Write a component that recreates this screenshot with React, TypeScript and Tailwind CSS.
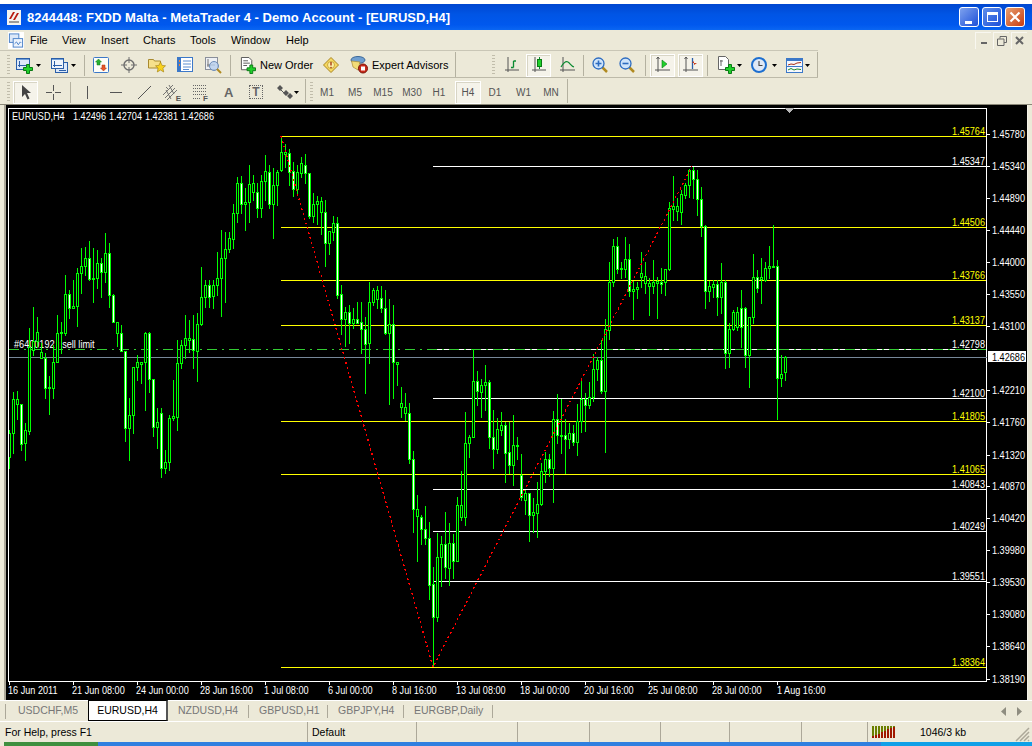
import React from "react";

// [high, bodyTop, bodyBottom, low, bear?] in page pixels, one row per H4 bar
const BARS: number[][] = [
  [430,433,457,468],[392,399,433,453],[391,399,404,419],[404,404,444,450,1],[423,430,443,460],[328,347,431,434],[307,341,350,355],[317,332,341,347],
  [343,352,358,358],[353,358,388,398,1],[376,387,388,414],[345,362,388,398],[315,333,362,362],[322,332,333,353],[275,294,333,335],[290,294,308,318,1],
  [280,306,308,308],[268,273,306,326],[248,266,273,293],[247,258,266,275],[241,258,279,280,1],[248,278,279,302],[250,263,278,288],[258,263,272,297,1],
  [233,253,272,282],[243,253,295,307,1],[294,295,322,322,1],[322,322,333,346],[325,333,351,351,1],[351,351,428,441,1],[398,415,428,460],[367,367,415,433],
  [355,362,367,380],[362,362,364,383],[332,333,362,410],[332,333,379,392,1],[379,379,427,436,1],[408,422,427,448],[408,413,468,477,1],[450,462,468,473],
  [415,418,462,470],[380,416,418,420],[340,363,417,430],[340,345,363,368],[315,338,345,358],[320,338,340,352],[315,339,350,368,1],[313,324,351,381],
  [267,297,324,325],[280,285,297,307],[280,285,297,307,1],[280,285,296,308],[252,278,285,295],[230,258,278,316],[232,249,258,302],[232,238,249,252],
  [204,213,239,248],[177,183,213,222],[176,183,204,213,1],[188,202,204,230],[165,184,202,222],[175,183,192,200],[183,192,208,217,1],[175,181,208,217],
  [155,171,181,200],[165,172,204,208,1],[168,185,204,238],[170,172,185,205],[137,152,170,171],[144,152,154,167],[149,153,172,185,1],[162,171,189,196,1],
  [165,172,189,193],[157,163,173,177],[154,165,173,183,1],[173,173,216,218,1],[193,204,216,222],[196,201,204,224],[197,201,212,234],[200,212,243,266,1],
  [231,231,243,254],[216,223,232,240],[217,223,295,298,1],[285,294,319,334,1],[307,312,319,346],[305,312,323,343,1],[308,319,323,328],[302,319,323,323,1],
  [302,322,329,353,1],[317,329,344,393,1],[282,302,343,363],[288,290,302,305],[286,290,299,308],[286,298,308,312,1],[290,308,333,334,1],[299,324,333,404],
  [305,324,362,398,1],[362,362,364,385],[387,403,407,417],[393,407,413,420],[403,413,459,463,1],[451,459,509,532,1],[495,509,516,561],[515,517,529,544,1],
  [506,529,538,544,1],[522,538,585,599,1],[567,584,617,666,1],[533,557,617,621],[536,544,557,586],[512,544,567,578,1],[523,543,568,585],[534,543,561,578,1],
  [497,505,561,561],[471,505,517,520],[412,443,517,525],[435,437,443,457],[349,381,437,437],[371,381,391,405,1],[379,385,392,417],[365,382,385,410],
  [380,382,437,448,1],[410,437,449,468,1],[418,429,449,453],[412,425,430,435],[422,425,453,482,1],[422,452,465,473,1],[415,445,465,485],[437,445,446,459],
  [454,475,497,500,1],[490,493,500,514],[493,493,515,541,1],[498,512,515,532],[482,504,513,537],[463,471,504,505],[452,459,471,482],[454,459,468,476,1],
  [411,419,468,502],[394,419,435,443,1],[399,435,436,453],[419,435,439,473,1],[423,433,439,448],[425,433,442,445,1],[404,421,442,455],[380,399,421,432],
  [393,399,405,431,1],[382,397,405,408],[354,369,397,401],[357,360,369,380],[340,360,391,393,1],[319,329,391,452],[262,282,330,339],[239,246,282,286],
  [237,246,269,273,1],[262,268,269,278],[237,259,269,277],[244,259,291,296,1],[281,289,291,319],[282,287,289,298],[252,273,277,287],[262,276,283,293],
  [278,283,286,315],[260,282,286,293],[277,281,283,318],[268,282,284,293,1],[269,269,282,295],[202,208,269,270],[176,206,209,220],[198,206,211,220],
  [190,194,212,224],[183,185,195,198],[169,170,185,197],[167,170,179,198,1],[170,179,199,215,1],[187,199,226,236,1],[225,226,291,308,1],[281,286,291,301],
  [280,284,287,297],[280,284,297,315,1],[263,282,297,313],[280,282,353,368,1],[323,329,353,367],[310,312,329,330],[307,312,327,330],[290,308,327,347,1],
  [307,308,355,367,1],[317,317,355,387],[254,277,317,323],[270,277,288,292,1],[258,277,279,303],[262,268,280,281],[246,266,268,278],[225,266,267,267],
  [260,266,378,419,1],[355,374,378,386],[356,357,372,380],
];

// fibonacci levels: y, label, colour, left end
const LEVELS: [number, string, string, number][] = [
  [136, "1.45764", "#ffff00", 281],
  [166, "1.45347", "#ffffff", 433],
  [227, "1.44506", "#ffff00", 281],
  [280, "1.43766", "#ffff00", 281],
  [325, "1.43137", "#ffff00", 281],
  [349, "1.42798", "#ffffff", 433],
  [398, "1.42100", "#ffffff", 433],
  [421, "1.41805", "#ffff00", 281],
  [474, "1.41065", "#ffff00", 281],
  [489, "1.40843", "#ffffff", 433],
  [531, "1.40249", "#ffffff", 433],
  [581, "1.39551", "#ffffff", 433],
  [667, "1.38364", "#ffff00", 281],
];

const PRICES: [number, string][] = [
  [134, "1.45780"], [166, "1.45340"], [198, "1.44890"], [230, "1.44440"], [262, "1.44000"], [294, "1.43550"],
  [326, "1.43100"], [390, "1.42210"], [422, "1.41760"], [455, "1.41320"], [486, "1.40870"], [518, "1.40420"],
  [550, "1.39980"], [582, "1.39530"], [614, "1.39080"], [646, "1.38640"], [679, "1.38190"],
];

const DATES = [
  "16 Jun 2011", "21 Jun 08:00", "24 Jun 00:00", "28 Jun 16:00", "1 Jul 08:00", "6 Jul 00:00", "8 Jul 16:00",
  "13 Jul 08:00", "18 Jul 00:00", "20 Jul 16:00", "25 Jul 08:00", "28 Jul 00:00", "1 Aug 16:00",
];

const ChartText = ({ x, y, fill = "#ffffff", anchor = "start", children }: { x: number; y: number; fill?: string; anchor?: "start" | "end"; children: React.ReactNode }) => (
  <text transform={`translate(${x} ${y}) scale(0.83 1)`} fontFamily="'Liberation Sans', sans-serif" fontSize={11} fill={fill} textAnchor={anchor}>
    {children}
  </text>
);

const Chart = () => (
  <svg viewBox="6 105 1021 595" className="block w-[1021px] h-[595px] bg-black">
    <g shapeRendering="crispEdges">
      <rect x="8.5" y="108.5" width="978" height="573" fill="none" stroke="#ffffff" />
      {PRICES.map(([y]) => <rect key={y} x="987" y={y} width="3" height="1" fill="#ffffff" />)}
      {DATES.map((_, k) => <rect key={k} x={9 + 64 * k} y="682" width="1" height="3" fill="#ffffff" />)}
      <path d="M785 108h9l-4.5 5z" fill="#b8b8b8" />
      {LEVELS.map(([y, , color, left]) => <rect key={y} x={left} y={y} width={986 - left} height="1" fill={color} />)}
      <rect x="9" y="357" width="978" height="1" fill="#778899" />
      <line x1="9" y1="349.5" x2="986" y2="349.5" stroke="#32cd32" strokeDasharray="10 5 2 5" />
    </g>
    {LEVELS.map(([y, label, color]) => <ChartText key={y} x={985} y={y - 1} fill={color} anchor="end">{label}</ChartText>)}
    <ChartText x={14} y={348}>#6400192 ı sell limit</ChartText>
    <g shapeRendering="crispEdges">
      {BARS.map(([high, top, bottom, low, bear], i) => {
        const x = 9 + 4 * i;
        return (
          <g key={i}>
            <rect x={x} y={high} width="1" height={low - high + 1} fill="#00ff00" />
            <rect x={x - 1 < 9 ? 9 : x - 1} y={top} width={x - 1 < 9 ? 2 : 3} height={bottom - top + 1} fill="#00ff00" />
            {bottom - top > 1 && <rect x={x} y={top + 1} width="1" height={bottom - top - 1} fill={bear ? "#ffffff" : "#000000"} />}
          </g>
        );
      })}
      <polyline points="281,136 433,667 692,166" fill="none" stroke="#ff0000" strokeWidth="1.3" strokeDasharray="2 3" />
      <rect x="988" y="351" width="38" height="11" fill="#ffffff" />
    </g>
    <ChartText x={12} y={120}>EURUSD,H4</ChartText>
    <ChartText x={73} y={120}>1.42496</ChartText>
    <ChartText x={109} y={120}>1.42704</ChartText>
    <ChartText x={145} y={120}>1.42381</ChartText>
    <ChartText x={181} y={120}>1.42686</ChartText>
    {PRICES.map(([y, p]) => <ChartText key={p} x={992} y={y + 4}>{p}</ChartText>)}
    <ChartText x={992} y={361} fill="#000000">1.42686</ChartText>
    {DATES.map((d, k) => <ChartText key={d} x={(k === 12 ? 9 : 8) + 64 * k} y={694}>{d}</ChartText>)}
  </svg>
);

const Grip = ({ className = "" }: { className?: string }) => (
  <div className={`w-[3px] h-[20px] shrink-0 bg-[repeating-linear-gradient(to_bottom,#c1bdab_0,#c1bdab_1px,transparent_1px,transparent_3px)] ${className}`} />
);
const Sep = ({ className = "" }: { className?: string }) => <div className={`w-px h-[21px] shrink-0 bg-[#b4b1a0] ${className}`} />;
const Arrow = ({ className = "" }: { className?: string }) => (
  <svg viewBox="0 0 5 3" className={`w-[5px] h-[3px] shrink-0 ${className}`}><path d="M0 0h5L2.500 3z" fill="#000" /></svg>
);
const Pressed = ({ className = "", children }: { className?: string; children: React.ReactNode }) => (
  <div className={`h-[23px] w-[25px] shrink-0 flex items-center justify-center bg-[#f5f3ea] border border-white shadow-[inset_1px_1px_0_#d8d5c5] ${className}`}>{children}</div>
);

const Plus = ({ x, y }: { x: number; y: number }) => (
  <path transform={`translate(${x} ${y})`} d="M3.500 .5h3v3h3v3h-3v3h-3v-3h-3v-3h3z" fill="#1fd02a" stroke="#0a7a14" />
);
const Glass = ({ sign }: { sign: "+" | "-" }) => (
  <svg viewBox="0 0 17 17" className="w-[17px] h-[17px]">
    <path d="M10 10l5 5" stroke="#b08a20" strokeWidth="2.500" />
    <circle cx="6.500" cy="6.500" r="5.500" fill="#cfe4fa" stroke="#2d6cc0" strokeWidth="1.300" />
    <path d={sign === "+" ? "M3.500 6.500h6M6.500 3.500v6" : "M3.500 6.500h6"} stroke="#2d6cc0" strokeWidth="1.600" />
  </svg>
);

const Toolbar1 = () => (
  <div className="flex items-center h-[28px] pt-[2px] w-[818px] border-y border-[#bdbaa9] border-t-[#c9c6b6]">
    <Grip className="ml-[7px]" />
    <svg viewBox="0 0 17 17" className="ml-[6px] w-[17px] h-[17px] shrink-0">
      <rect x=".5" y="1.500" width="13" height="11" fill="#dce8f8" stroke="#2a5ea8" />
      <path d="M1 2.500h12" stroke="#6f9fda" /><path d="M3.500 4v6M2 8.500h9" stroke="#2a5ea8" />
      <Plus x={7} y={7} />
    </svg>
    <Arrow className="ml-[3px]" />
    <svg viewBox="0 0 17 17" className="ml-[10px] w-[17px] h-[17px] shrink-0">
      <rect x="4.500" y="5.500" width="12" height="10" fill="#dce8f8" stroke="#2a5ea8" />
      <rect x=".5" y="1.500" width="12" height="10" fill="#eef4fc" stroke="#2a5ea8" />
      <path d="M1 2.500h11" stroke="#6f9fda" /><path d="M3.500 4v6M2 8.500h9M8 13.500h7" stroke="#2a5ea8" />
    </svg>
    <Arrow className="ml-[3px]" />
    <Sep className="ml-[8px]" />
    <svg viewBox="0 0 16 16" className="ml-[8px] w-[16px] h-[16px] shrink-0">
      <rect x=".5" y=".5" width="15" height="15" rx="1" fill="#fdfdf8" stroke="#3c78c8" />
      <path d="M5.500 2l3 3H7v3H4V5H2.500z" fill="#28b030" stroke="#137a1a" strokeWidth=".5" />
      <path d="M10.500 14l3-3H12V8H9v3H7.500z" fill="#e8552a" stroke="#a83010" strokeWidth=".5" />
    </svg>
    <svg viewBox="0 0 16 16" className="ml-[12px] w-[16px] h-[16px] shrink-0">
      <circle cx="8" cy="8" r="5" fill="none" stroke="#6e6e6e" strokeWidth="1.400" />
      <path d="M8 0v6M8 10v6M0 8h6M10 8h6" stroke="#6e6e6e" />
    </svg>
    <svg viewBox="0 0 18 18" className="ml-[11px] w-[18px] h-[18px] shrink-0">
      <path d="M.5 3.500h5l1 1.500h6v7H.5z" fill="#f6e08c" stroke="#a88a30" />
      <path d="M12.500 6l1.600 3.400 3.400.4-2.600 2.400.8 3.800-3.200-2-3.200 2 .8-3.800-2.600-2.400 3.400-.4z" fill="#f9d21e" stroke="#a8861a" strokeWidth=".7" />
    </svg>
    <svg viewBox="0 0 16 16" className="ml-[11px] w-[16px] h-[16px] shrink-0">
      <rect x=".5" y=".5" width="15" height="14" fill="#fff" stroke="#3c78c8" />
      <rect x="1" y="1" width="3" height="13" fill="#3c78c8" />
      <path d="M6 4h8M6 7h8M6 10h8M6 12.500h6" stroke="#5b8dd0" />
      <path d="M2 4h1M2 8h1" stroke="#f08030" strokeWidth="2" />
    </svg>
    <svg viewBox="0 0 17 17" className="ml-[12px] w-[17px] h-[17px] shrink-0">
      <rect x=".5" y=".5" width="12" height="12" fill="#eef0f4" stroke="#8a8f9a" />
      <path d="M3 2v8M2 8h8" stroke="#777" />
      <circle cx="9" cy="9" r="4.500" fill="#b8d0ee" fillOpacity=".8" stroke="#6d8cb8" />
      <path d="M12 12l4 4" stroke="#b08a20" strokeWidth="2" />
    </svg>
    <Sep className="ml-[8px]" />
    <svg viewBox="0 0 17 18" className="ml-[9px] w-[16px] h-[17px] shrink-0">
      <path d="M1.500 .5h8l3 3v10h-11z" fill="#fff" stroke="#555" />
      <path d="M3.500 4h5M3.500 6.500h7M3.500 9h4" stroke="#555" />
      <Plus x={7} y={8} />
    </svg>
    <span className="ml-[4px] w-[52px] shrink-0 whitespace-nowrap">New Order</span>
    <svg viewBox="0 0 16 16" className="ml-[11px] w-[16px] h-[16px] shrink-0">
      <path d="M8 .5L15.500 8 8 15.500.5 8z" fill="#f6d860" stroke="#a88420" />
      <circle cx="8" cy="8" r="3.500" fill="#fbeea8" stroke="#b89020" strokeWidth=".7" />
      <path d="M8 5v3.500" stroke="#a83a10" strokeWidth="1.400" /><circle cx="8" cy="10.500" r=".8" fill="#a83a10" />
    </svg>
    <svg viewBox="0 0 18 18" className="ml-[11px] w-[18px] h-[18px] shrink-0">
      <ellipse cx="8" cy="4" rx="7" ry="3.500" fill="#6f9fd0" stroke="#3c6898" />
      <path d="M1.500 5l1.500 6 5 3 2-8z" fill="#f2dc78" stroke="#a88a30" strokeWidth=".7" />
      <circle cx="13" cy="12.500" r="4.500" fill="#c82818" stroke="#7a1408" />
      <rect x="11" y="10.500" width="4" height="4" fill="#fff" />
    </svg>
    <span className="ml-[4px] w-[77px] shrink-0 whitespace-nowrap">Expert Advisors</span>
    <Sep className="ml-[6px] h-[25px] -mt-[2px]" />
    <Grip className="ml-[36px]" />
    <svg viewBox="0 0 14 16" className="ml-[10px] w-[14px] h-[16px] shrink-0">
      <path d="M3 0v15M0 13h14" stroke="#555" />
      <path d="M8.500 10.500V4M6 10.500h2.500M8.500 4H11" stroke="#0a8a30" strokeWidth="1.300" />
    </svg>
    <Pressed className="ml-[7px]">
      <svg viewBox="0 0 14 16" className="w-[14px] h-[16px]">
        <path d="M3 0v15M0 13h14" stroke="#555" />
        <path d="M7.500 0v12" stroke="#0a8a30" /><rect x="5.500" y="2.500" width="4" height="7" fill="#1fd02a" stroke="#0a7a14" />
      </svg>
    </Pressed>
    <svg viewBox="0 0 15 16" className="ml-[9px] w-[15px] h-[16px] shrink-0">
      <path d="M3 0v15M0 13h15" stroke="#555" />
      <path d="M1 10c3-5 5-6 7-5s3 4 6 5" fill="none" stroke="#0a8a30" strokeWidth="1.200" />
    </svg>
    <Sep className="ml-[8px]" />
    <div className="ml-[8px] w-[16px] shrink-0"><Glass sign="+" /></div>
    <div className="ml-[11px] w-[17px] shrink-0"><Glass sign="-" /></div>
    <Sep className="ml-[9px]" />
    <Pressed className="ml-[4px]">
      <svg viewBox="0 0 15 16" className="w-[15px] h-[16px]">
        <path d="M3 0v15M0 13h15M1.500 2L3 0l1.500 2" fill="none" stroke="#555" />
        <path d="M7 3l5 4-5 4z" fill="#1fd02a" stroke="#0a7a14" strokeWidth=".6" />
      </svg>
    </Pressed>
    <Pressed className="ml-[3px]">
      <svg viewBox="0 0 15 16" className="w-[15px] h-[16px]">
        <path d="M3 0v15M0 13h15M1.500 2L3 0l1.500 2" fill="none" stroke="#555" />
        <path d="M9.500 1v11" stroke="#2a5ea8" strokeWidth="1.300" /><path d="M14 6H9l2-2v4z" fill="#c83818" />
      </svg>
    </Pressed>
    <Sep className="ml-[4px]" />
    <svg viewBox="0 0 18 18" className="ml-[9px] w-[18px] h-[18px] shrink-0">
      <path d="M1.500 .5h7l3 3v10h-10z" fill="#fff" stroke="#666" />
      <path d="M4 4v6M3 5h3" stroke="#666" />
      <Plus x={8} y={8} />
    </svg>
    <Arrow className="ml-[2px]" />
    <svg viewBox="0 0 16 16" className="ml-[9px] w-[16px] h-[16px] shrink-0">
      <circle cx="8" cy="8" r="7" fill="#dfe9f6" stroke="#1d6fd0" strokeWidth="2" />
      <path d="M8 4v4.500h3.500" fill="none" stroke="#444" strokeWidth="1.100" />
    </svg>
    <Arrow className="ml-[5px]" />
    <svg viewBox="0 0 17 15" className="ml-[9px] w-[17px] h-[15px] shrink-0">
      <rect x=".5" y=".5" width="16" height="14" fill="#f6f8fc" stroke="#3c78c8" />
      <rect x="1" y="1" width="15" height="2" fill="#3c78c8" />
      <path d="M2 7l3-1 3 .5 3-1.500 4-.5" fill="none" stroke="#a83018" />
      <path d="M1 8.500h15" stroke="#3c78c8" />
      <path d="M2 12l3-1.500 3 1.500 3-1 4 .5" fill="none" stroke="#1c8a2c" />
    </svg>
    <Arrow className="ml-[2px]" />
    <Sep className="ml-[7px] h-[25px] -mt-[2px]" />
  </div>
);

const FRAMES: [string, string][] = [
  ["M1", "w-[28px]"], ["M5", "w-[28px]"], ["M15", "w-[28px]"], ["M30", "w-[30px]"], ["H1", "w-[24px]"],
];
const FRAMES_AFTER: [string, string][] = [["D1", "w-[28px]"], ["W1", "w-[29px]"], ["MN", "w-[26px]"]];

const Toolbar2 = () => (
  <div className="flex items-center h-[26px] pt-[2px]">
    <Grip className="ml-[7px]" />
    <Pressed className="ml-[3px]">
      <svg viewBox="0 0 10 15" className="w-[10px] h-[15px]"><path d="M1 0v12l3-3 2.500 5.500 2-1L6 8h4z" fill="#444" /></svg>
    </Pressed>
    <svg viewBox="0 0 15 15" className="ml-[8px] w-[15px] h-[15px] shrink-0"><path d="M7.500 0v6M7.500 9v6M0 7.500h6M9 7.500h6" stroke="#555" /></svg>
    <Sep className="ml-[9px]" />
    <svg viewBox="0 0 15 15" className="ml-[9px] w-[15px] h-[15px] shrink-0"><path d="M7.500 1v13" stroke="#555" /></svg>
    <svg viewBox="0 0 15 15" className="ml-[13px] w-[15px] h-[15px] shrink-0"><path d="M2 7.500h12" stroke="#555" /></svg>
    <svg viewBox="0 0 15 15" className="ml-[14px] w-[15px] h-[15px] shrink-0"><path d="M1 14L14 1" stroke="#555" /></svg>
    <div className="ml-[11px] w-[18px] h-[18px] shrink-0 relative">
      <svg viewBox="0 0 18 18" className="w-[18px] h-[18px]"><path d="M0 12L10 2M2 15L12 5M4 17L14 7M3 4l2 2M6 2l5 9M3 7l5 9" stroke="#666" strokeWidth=".9" /></svg>
      <span className="absolute right-0 bottom-[-2px] text-[8px] font-bold leading-none text-[#555]">E</span>
    </div>
    <div className="ml-[11px] w-[16px] h-[18px] shrink-0 relative">
      <svg viewBox="0 0 16 18" className="w-[16px] h-[18px]"><path d="M1 2.500h14M1 5.500h14M1 8.500h14M1 11.500h14M1 15.500h8" stroke="#666" strokeDasharray="1 1" /></svg>
      <span className="absolute right-0 bottom-[-2px] text-[8px] font-bold leading-none text-[#555]">F</span>
    </div>
    <span className="ml-[16px] w-[8px] shrink-0 text-[13px] font-bold text-[#666] leading-none">A</span>
    <div className="ml-[17px] w-[14px] h-[14px] shrink-0 flex items-center justify-center border border-dotted border-[#666] text-[12px] font-bold leading-none text-[#666]">T</div>
    <svg viewBox="0 0 16 14" className="ml-[14px] w-[16px] h-[14px] shrink-0"><path d="M3 0l3 3-3 3-3-3zM9 5l3 3-3 3-3-3zM13 8l3 3-3 3-3-3z" fill="#555" /><path d="M4 5l3 3" stroke="#555" /></svg>
    <Arrow className="ml-[1px]" />
    <Sep className="ml-[6px] h-[24px] -mt-[2px]" />
    <Grip className="ml-[4px]" />
    {FRAMES.map(([label, w]) => <span key={label} className={`${w} shrink-0 text-center text-[10px] text-[#555]`}>{label}</span>)}
    <Pressed className="ml-[4px] w-[26px] text-[10px] text-[#555]">H4</Pressed>
    {FRAMES_AFTER.map(([label, w]) => <span key={label} className={`${w} shrink-0 text-center text-[10px] text-[#555]`}>{label}</span>)}
    <Sep className="ml-[3px] h-[24px] -mt-[2px]" />
  </div>
);

const MENU: [string, string][] = [
  ["File", "w-[32px]"], ["View", "w-[39px]"], ["Insert", "w-[42px]"], ["Charts", "w-[47px]"], ["Tools", "w-[41px]"], ["Window", "w-[55px]"], ["Help", "w-[32px]"],
];

const MdiButton = ({ children }: { children: React.ReactNode }) => (
  <div className="w-[16px] h-[17px] flex items-center justify-center border-l border-t border-[#f8f7f0]">{children}</div>
);

const CaptionButton = ({ className, children }: { className: string; children: React.ReactNode }) => (
  <div className={`w-[20px] h-[20px] rounded-[3px] border border-white flex items-center justify-center ${className}`}>{children}</div>
);

const Tab = ({ className, children }: { className: string; children: React.ReactNode }) => (
  <span className={`shrink-0 whitespace-nowrap text-[#777] ${className}`}>{children}</span>
);

const SIGNAL = [2, 3, 4, 6, 7, 9, 10, 11];

export default function App() {
  return (
    <div className="w-[1032px] h-[746px] overflow-hidden flex flex-col bg-[#ece9d8] text-[11px] text-black font-['Liberation_Sans',sans-serif]">
      <div className="h-[4px] shrink-0 bg-white" />
      <div className="h-[26px] shrink-0 flex items-center bg-[linear-gradient(to_bottom,#0047d0_0%,#0055e5_40%,#0058ee_80%,#0a66f2_100%)]">
        <svg viewBox="0 0 14 15" className="ml-[7px] w-[14px] h-[15px] shrink-0">
          <rect width="14" height="15" fill="#f4f4f0" />
          <path d="M2 9l4-7h2l-4 7zM6 10l4-7h2l-4 7z" fill="#b81c10" /><path d="M2 12h10" stroke="#444" />
        </svg>
        <span className="ml-[6px] w-[424px] pt-[2px] whitespace-nowrap text-[13px] font-bold text-white tracking-[0.04px]">8244448: FXDD Malta - MetaTrader 4 - Demo Account - [EURUSD,H4]</span>
        <div className="ml-auto mr-[7px] flex gap-[3px]">
          <CaptionButton className="bg-[linear-gradient(135deg,#7ea2ee,#1e50d8)] items-end pb-[2px]"><div className="w-[7px] h-[3px] bg-white mr-[2px]" /></CaptionButton>
          <CaptionButton className="bg-[linear-gradient(135deg,#5f8eea,#1e50d8)]"><div className="w-[11px] h-[10px] border border-t-[3px] border-white" /></CaptionButton>
          <CaptionButton className="bg-[linear-gradient(135deg,#e8a070,#c83c10)]">
            <svg viewBox="0 0 12 12" className="w-[12px] h-[12px]"><path d="M1.500 1.500l9 9M10.500 1.500l-9 9" stroke="#fff" strokeWidth="2.200" /></svg>
          </CaptionButton>
        </div>
      </div>
      <div className="h-[20px] shrink-0 flex items-center">
        <svg viewBox="0 0 17 17" className="ml-[8px] w-[16px] h-[17px] shrink-0 bg-white">
          <rect x="1.500" y="1.500" width="10" height="9" fill="#dce8f8" stroke="#4a80c8" />
          <rect x="5.500" y="6.500" width="10" height="9" fill="#eef4fc" stroke="#4a80c8" />
          <path d="M7 12l2-2 2 3 2-3 1 1" fill="none" stroke="#4a80c8" />
        </svg>
        <div className="ml-[6px] pt-[1px] flex text-[11px]">
          {MENU.map(([label, w]) => <span key={label} className={`${w} shrink-0`}>{label}</span>)}
        </div>
        <div className="ml-auto mr-[5px] flex gap-[2px]">
          <MdiButton><div className="w-[6px] h-[2px] mt-[5px] bg-[#666]" /></MdiButton>
          <MdiButton>
            <svg viewBox="0 0 10 10" className="w-[10px] h-[10px]"><path d="M3 2.500V.5h6.500v6H7M.5 3h6.500v6.500H.5z" fill="none" stroke="#666" /></svg>
          </MdiButton>
          <MdiButton>
            <svg viewBox="0 0 9 9" className="w-[9px] h-[9px]"><path d="M1 1l7 7M8 1L1 8" stroke="#666" strokeWidth="2" /></svg>
          </MdiButton>
        </div>
      </div>
      <Toolbar1 />
      <Toolbar2 />
      <div className="h-px shrink-0 bg-[#8a8778]" />
      <div className="h-[595px] shrink-0 flex">
        <div className="ml-[4px] w-[2px] bg-[#aca899]" />
        <Chart />
        <div className="w-[1px] bg-[#f4f2e8]" />
      </div>
      <div className="h-px shrink-0 bg-white" />
      <div className="h-[20px] shrink-0 flex items-center text-[10.5px]">
        <div className="ml-[5px] w-px h-[15px] bg-[#aca899]" />
        <Tab className="ml-[12px] w-[70px]">USDCHF,M5</Tab>
        <div className="h-[21px] w-[80px] shrink-0 self-start -mt-px flex items-center justify-center bg-white border-t border-l border-r-2 border-b border-black border-r-[#555] text-black">EURUSD,H4</div>
        <Tab className="ml-[10px] w-[70px]">NZDUSD,H4</Tab>
        <div className="w-px h-[13px] shrink-0 bg-[#aca899]" />
        <Tab className="ml-[10px] w-[68px]">GBPUSD,H1</Tab>
        <div className="w-px h-[13px] shrink-0 bg-[#aca899]" />
        <Tab className="ml-[10px] w-[65px]">GBPJPY,H4</Tab>
        <div className="w-px h-[13px] shrink-0 bg-[#aca899]" />
        <Tab className="ml-[10px] w-[78px]">EURGBP,Daily</Tab>
        <div className="w-px h-[13px] shrink-0 bg-[#aca899]" />
        <div className="ml-auto mr-[10px] flex gap-[11px]">
          <svg viewBox="0 0 5 9" className="w-[5px] h-[9px]"><path d="M5 0v9L0 4.500z" fill="#8f8d80" /></svg>
          <svg viewBox="0 0 5 9" className="w-[5px] h-[9px]"><path d="M0 0v9l5-4.500z" fill="#8f8d80" /></svg>
        </div>
      </div>
      <div className="h-px shrink-0 bg-white" />
      <div className="h-[20px] shrink-0 flex items-center text-[10.5px]">
        <span className="ml-[5px] pt-[2px] w-[302px] shrink-0">For Help, press F1</span>
        <div className="w-[109px] shrink-0 h-full pl-[4px] pt-[2px] flex items-center border-l border-[#aca899]">Default</div>
        <div className="w-[101px] shrink-0 h-full border-l border-[#aca899]" />
        <div className="w-[72px] shrink-0 h-full border-l border-[#aca899]" />
        <div className="w-[71px] shrink-0 h-full border-l border-[#aca899]" />
        <div className="w-[69px] shrink-0 h-full border-l border-[#aca899]" />
        <div className="w-[72px] shrink-0 h-full border-l border-[#aca899]" />
        <div className="w-[66px] shrink-0 h-full border-l border-[#aca899]" />
        <div className="h-full flex-1 flex items-center border-l border-[#aca899] pl-[4px]">
          <div className="flex items-end gap-px h-[12px]">
            {SIGNAL.map((h, i) => (
              <div key={i} className="w-[2px] h-[12px] flex flex-col justify-end bg-[#6b7f00]">
                <div className="bg-[#a01800]" style={{ height: h }} />
              </div>
            ))}
          </div>
          <span className="ml-[25px] pt-[2px]">1046/3 kb</span>
          <svg viewBox="0 0 16 16" className="ml-auto mr-[2px] w-[16px] h-[16px] self-end"><path d="M15 2L2 15M15 6l-9 9M15 10l-5 5M15 14l-1 1" stroke="#aca899" strokeWidth="1.500" /></svg>
        </div>
      </div>
      <div className="h-[4px] shrink-0 flex">
        <div className="w-[4px]" />
        <div className="w-[94px] bg-[#3f8f3f]" />
        <div className="w-[783px] bg-[#2f7fe0]" />
        <div className="flex-1 bg-[#10a0e8]" />
      </div>
    </div>
  );
}
